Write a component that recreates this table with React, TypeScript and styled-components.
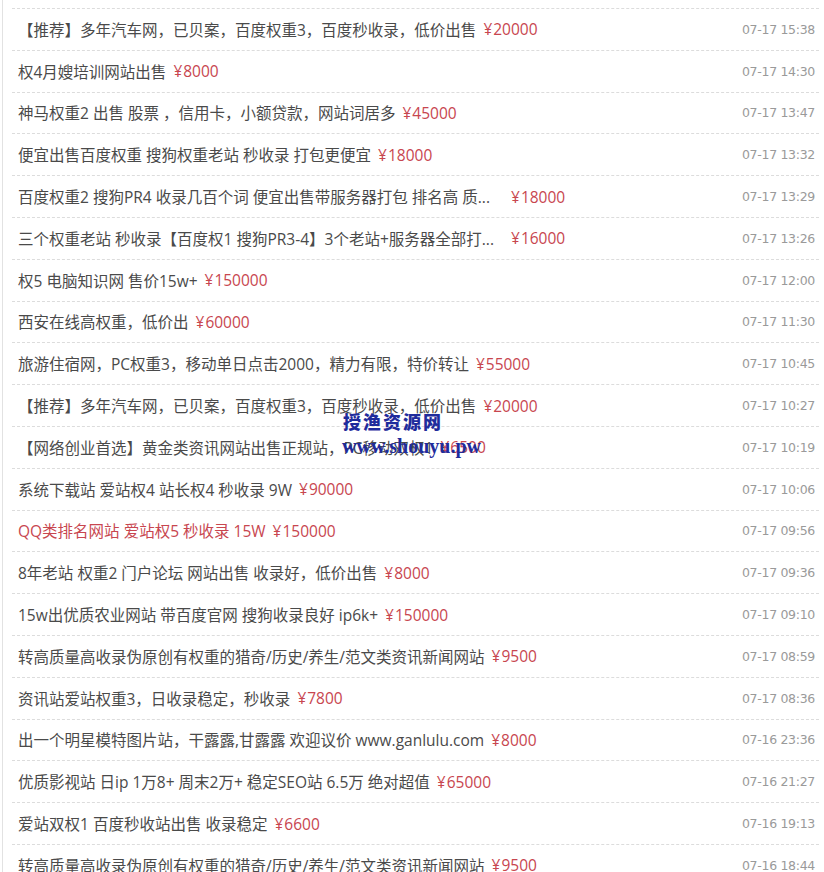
import React from "react";
import styled, { createGlobalStyle } from "styled-components";

const Global = createGlobalStyle`
  html, body { margin: 0; padding: 0; background: #fff; }
  body { font-family: "Open Sans", "Noto Sans CJK SC", sans-serif; }
`;

const Page = styled.div`
  position: relative;
  width: 824px;
  height: 872px;
  overflow: hidden;
  background: #fff;
`;

const Panel = styled.div`
  margin-left: 2px;
  border-left: 1px solid #e2e2e2;
  padding: 8px 5px 0 9px;
  height: 100%;
  box-sizing: border-box;
`;

const List = styled.ul`
  list-style: none;
  margin: 0;
  padding: 0;
`;

const Row = styled.li`
  display: flex;
  align-items: center;
  box-sizing: border-box;
  height: 41.8px;
  border-top: 1px dashed #dcdcdc;
  padding: 0 4px 0 6px;
  font-size: 15.5px;
  color: #4a4a4a;
  white-space: nowrap;
`;

const Title = styled.span<{ $hot?: boolean; $fixed?: boolean }>`
  color: ${(p) => (p.$hot ? "#c8464f" : "#4a4a4a")};
  ${(p) => (p.$fixed ? "width: 486px; flex: none;" : "")}
`;

const Price = styled.span`
  color: #c8464f;
  margin-left: 7px;
`;

const Yen = styled.span`
  margin-right: 1px;
`;

const Time = styled.span`
  margin-left: auto;
  font-family: "DejaVu Sans", "Liberation Sans", sans-serif;
  font-size: 12.5px;
  color: #9a9a9a;
  letter-spacing: -0.3px;
`;

const Watermark = styled.div`
  position: absolute;
  left: 342px;
  top: 407px;
  display: flex;
  flex-direction: column;
  align-items: flex-start;
  color: #1f2c9c;
  pointer-events: none;
`;

const MarkName = styled.div`
  font-family: "Noto Sans CJK SC", sans-serif;
  font-weight: 900;
  font-size: 18px;
  line-height: 28px;
  letter-spacing: 2px;
  padding-left: 1px;
`;

const MarkUrl = styled.div`
  font-family: "Liberation Serif", serif;
  font-weight: bold;
  font-size: 20px;
  line-height: 22px;
  letter-spacing: 0px;
`;

type Item = { t: string; p?: string; d: string; hot?: boolean; fixed?: boolean };

const items: Item[] = [
  { t: "【推荐】多年汽车网，已贝案，百度权重3，百度秒收录，低价出售", p: "20000", d: "07-17 15:38" },
  { t: "权4月嫂培训网站出售", p: "8000", d: "07-17 14:30" },
  { t: "神马权重2 出售 股票 ，信用卡，小额贷款，网站词居多", p: "45000", d: "07-17 13:47" },
  { t: "便宜出售百度权重 搜狗权重老站 秒收录 打包更便宜", p: "18000", d: "07-17 13:32" },
  { t: "百度权重2 搜狗PR4 收录几百个词 便宜出售带服务器打包 排名高 质...", p: "18000", d: "07-17 13:29", fixed: true },
  { t: "三个权重老站 秒收录【百度权1 搜狗PR3-4】3个老站+服务器全部打...", p: "16000", d: "07-17 13:26", fixed: true },
  { t: "权5 电脑知识网 售价15w+", p: "150000", d: "07-17 12:00" },
  { t: "西安在线高权重，低价出", p: "60000", d: "07-17 11:30" },
  { t: "旅游住宿网，PC权重3，移动单日点击2000，精力有限，特价转让", p: "55000", d: "07-17 10:45" },
  { t: "【推荐】多年汽车网，已贝案，百度权重3，百度秒收录，低价出售", p: "20000", d: "07-17 10:27" },
  { t: "【网络创业首选】黄金类资讯网站出售正规站，PC移动双权1", p: "6500", d: "07-17 10:19" },
  { t: "系统下载站 爱站权4 站长权4 秒收录 9W", p: "90000", d: "07-17 10:06" },
  { t: "QQ类排名网站 爱站权5 秒收录 15W", p: "150000", d: "07-17 09:56", hot: true },
  { t: "8年老站 权重2 门户论坛 网站出售 收录好，低价出售", p: "8000", d: "07-17 09:36" },
  { t: "15w出优质农业网站 带百度官网 搜狗收录良好 ip6k+", p: "150000", d: "07-17 09:10" },
  { t: "转高质量高收录伪原创有权重的猎奇/历史/养生/范文类资讯新闻网站", p: "9500", d: "07-17 08:59" },
  { t: "资讯站爱站权重3，日收录稳定，秒收录", p: "7800", d: "07-17 08:36" },
  { t: "出一个明星模特图片站，干露露,甘露露 欢迎议价 www.ganlulu.com", p: "8000", d: "07-16 23:36" },
  { t: "优质影视站 日ip 1万8+ 周末2万+ 稳定SEO站 6.5万 绝对超值", p: "65000", d: "07-16 21:27" },
  { t: "爱站双权1 百度秒收站出售 收录稳定", p: "6600", d: "07-16 19:13" },
  { t: "转高质量高收录伪原创有权重的猎奇/历史/养生/范文类资讯新闻网站", p: "9500", d: "07-16 18:44" },
];

export default function App() {
  return (
    <Page>
      <Global />
      <Panel>
        <List>
          {items.map((it, i) => (
            <Row key={i}>
              <Title $hot={it.hot} $fixed={it.fixed}>{it.t}</Title>
              {it.p && (
                <Price>
                  <Yen>¥</Yen>
                  {it.p}
                </Price>
              )}
              <Time>{it.d}</Time>
            </Row>
          ))}
        </List>
      </Panel>
      <Watermark>
        <MarkName>授渔资源网</MarkName>
        <MarkUrl>www.shouyu.pw</MarkUrl>
      </Watermark>
    </Page>
  );
}
